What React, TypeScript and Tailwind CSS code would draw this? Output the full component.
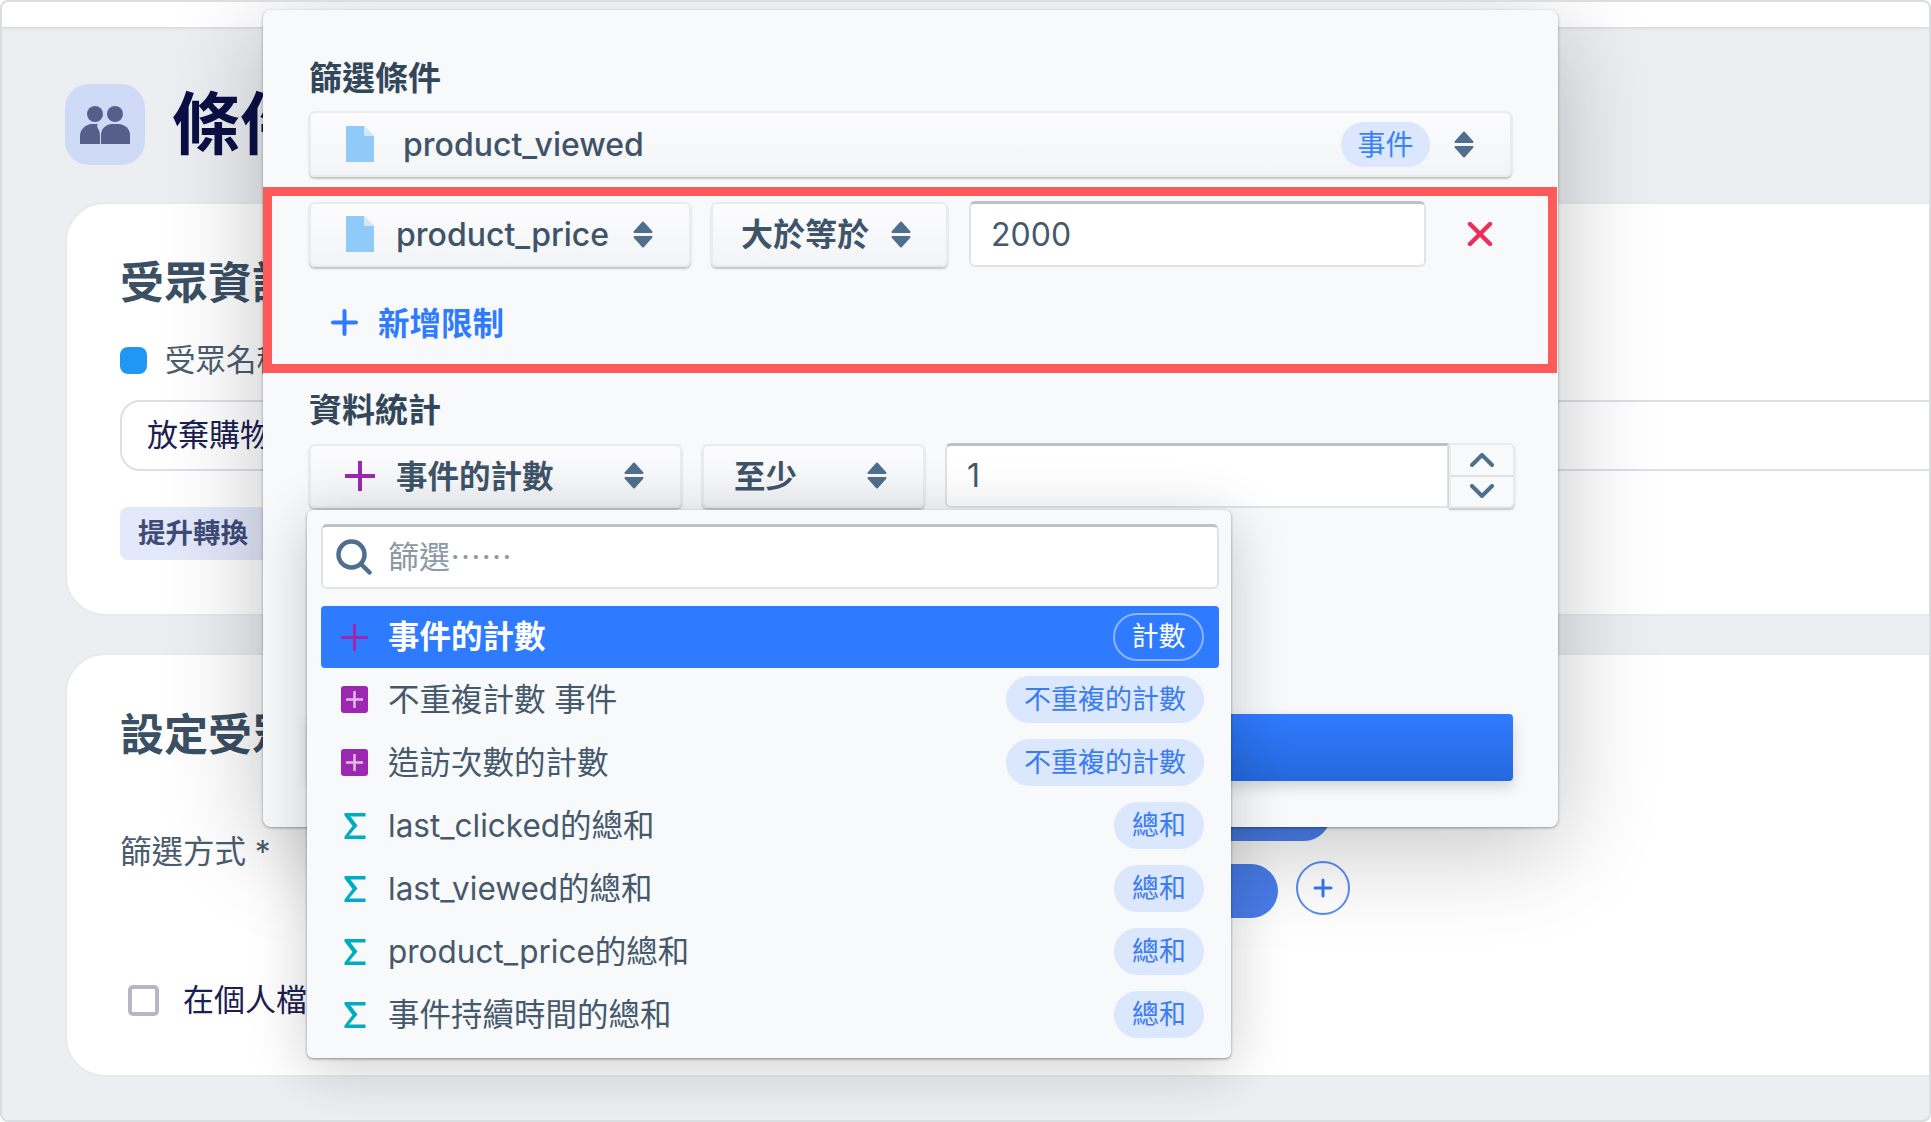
import clsx from "clsx";
import type { ReactNode } from "react";

function Chevrons() {
  return (
    <svg width="20" height="27" viewBox="0 0 20 27" fill="#4f6f8d" stroke="#4f6f8d" strokeWidth="2" strokeLinejoin="round" className="shrink-0">
      <path d="M10 1.5 18.5 11H1.5Z" />
      <path d="M1.5 16H18.5L10 25.5Z" />
    </svg>
  );
}

function FileIcon() {
  return (
    <svg width="28" height="36" viewBox="0 0 28 36" className="shrink-0">
      <path d="M0 0H18L28 10V36H0Z" fill="#90caf9" />
      <path d="M18 0 28 10H18Z" fill="#d3e9fb" />
    </svg>
  );
}

function PlainPlus({ size, stroke }: { size: number; stroke: number }) {
  return (
    <svg width={size} height={size} viewBox={`0 0 ${size} ${size}`} stroke="#9c27b0" strokeWidth={stroke} className="shrink-0">
      <path d={`M${size / 2} 0V${size}M0 ${size / 2}H${size}`} />
    </svg>
  );
}

function PlusSquare() {
  return (
    <svg width="27" height="27" viewBox="0 0 27 27" className="shrink-0">
      <rect width="27" height="27" rx="3" fill="#9c27b0" />
      <path d="M13.5 5V22M5 13.5H22" stroke="#e1bee7" strokeWidth="2.5" />
    </svg>
  );
}

function Sigma() {
  return (
    <svg width="22" height="26" viewBox="0 0 22 26" fill="#00acc1" className="ml-[3px] mr-[2px] shrink-0">
      <path d="M0.5 0H21.5V3.5H6.5L13.5 12.5 5 22.5H21.5V26H0.5V23.5L8.5 13 0.5 2.5Z" />
    </svg>
  );
}

function SelectButton({ className, children }: { className?: string; children: ReactNode }) {
  return (
    <div
      className={clsx(
        "flex items-center rounded-md border-2 border-[#e9ebee] bg-gradient-to-b from-[#fcfcfd] to-[#f2f4f7] text-[#3f5468] shadow-[0_2px_2px_rgba(0,0,0,0.22)]",
        className
      )}
    >
      {children}
    </div>
  );
}

function TextInput({ className, children }: { className?: string; children: ReactNode }) {
  return (
    <div
      className={clsx(
        "flex items-center border-2 border-t-[3px] border-[#e2e3e6] border-t-[#bfc0c3] bg-white text-[32px] text-[#46596c]",
        className
      )}
    >
      {children}
    </div>
  );
}

const menuItems = [
  { icon: <PlusSquare />, label: "不重複計數 事件", tag: "不重複的計數" },
  { icon: <PlusSquare />, label: "造訪次數的計數", tag: "不重複的計數" },
  { icon: <Sigma />, label: "last_clicked的總和", tag: "總和" },
  { icon: <Sigma />, label: "last_viewed的總和", tag: "總和" },
  { icon: <Sigma />, label: "product_price的總和", tag: "總和" },
  { icon: <Sigma />, label: "事件持續時間的總和", tag: "總和" },
];

function MetricMenu() {
  return (
    <div className="absolute left-[44px] top-[500px] h-[548px] w-[924px] rounded-md bg-[#f8f9fb] py-[14px] pl-[14px] pr-[12px] shadow-[0_1px_3px_rgba(0,0,0,0.4),0_10px_60px_rgba(0,0,0,0.2)]">
      <TextInput className="h-[65px] gap-[16px] rounded-md pl-[13px]">
        <svg width="36" height="36" viewBox="0 0 36 36" fill="none" stroke="#4f6f8d" strokeWidth="4.5" strokeLinecap="round" className="shrink-0">
          <circle cx="15.5" cy="15.5" r="13" />
          <path d="M25 25 33.5 33.5" />
        </svg>
        <span className="-mt-[4px] font-['Noto_Sans_CJK_TC',sans-serif] text-[31px] text-[#8c9aa6]">篩選……</span>
      </TextInput>
      <div className="mt-[17px] flex h-[62px] items-center rounded-sm bg-[#2f7bff] pl-[20px] pr-[15px]">
        <PlainPlus size={27} stroke={3} />
        <span className="ml-[20px] flex-1 text-[31.5px] font-bold text-white">事件的計數</span>
        <span className="flex h-[48px] w-[91px] items-center justify-center rounded-full border-2 border-[#8db5fb] text-[27px] text-white">
          計數
        </span>
      </div>
      {menuItems.map((item) => (
        <div key={item.label} className="flex h-[63px] items-center pl-[20px] pr-[15px]">
          {item.icon}
          <span className="ml-[20px] flex-1 pt-[1px] text-[31.5px] text-[#46596c]">{item.label}</span>
          <span className="flex h-[47px] items-center rounded-full bg-[#dbe7fd] px-[18px] pt-[2px] text-[27px] text-[#3b7df0]">
            {item.tag}
          </span>
        </div>
      ))}
    </div>
  );
}

function FilterModal() {
  return (
    <div className="absolute left-[261px] top-[8px] h-[817px] w-[1295px] rounded-lg bg-[#f8f9fb] pt-[46px] shadow-[0_1px_3px_rgba(0,0,0,0.35),0_20px_100px_rgba(0,0,0,0.24)]">
      <h2 className="ml-[46px] h-[40px] pt-[2px] text-[33px] font-bold leading-[40px] text-[#33475b]">篩選條件</h2>
      <SelectButton className="ml-[46px] mt-[15px] h-[66px] w-[1203px] pl-[35px] pr-[36px]">
        <FileIcon />
        <span className="ml-[29px] flex-1 pt-[2px] text-[32px] font-medium">product_viewed</span>
        <span className="flex h-[45px] w-[89px] items-center justify-center rounded-full bg-[#dbe7fd] pt-[2px] text-[28px] text-[#3b82f6]">
          事件
        </span>
        <span className="ml-[24px]">
          <Chevrons />
        </span>
      </SelectButton>

      <section className="mt-[10px] h-[186px] w-[1294px] border-[9px] border-[#ff5a5a] pl-[37px] pt-[5px]">
        <div className="flex items-center">
          <SelectButton className="h-[65px] w-[382px] pl-[35px] pr-[36px]">
            <FileIcon />
            <span className="ml-[22px] flex-1 pt-[1px] text-[32px] font-medium">product_price</span>
            <Chevrons />
          </SelectButton>
          <SelectButton className="ml-[20px] h-[65px] w-[237px] pl-[28px] pr-[35px]">
            <span className="flex-1 pt-[2px] text-[32px] font-bold">大於等於</span>
            <Chevrons />
          </SelectButton>
          <TextInput className="ml-[21px] h-[66px] w-[457px] rounded-md pl-[20px]">2000</TextInput>
          <svg width="26" height="24" viewBox="0 0 26 24" stroke="#e8305a" strokeWidth="4.5" strokeLinecap="round" className="ml-[41px] shrink-0">
            <path d="M3 2 23 22M23 2 3 22" />
          </svg>
        </div>
        <div className="ml-[22px] mt-[33px] flex h-[45px] items-center gap-[20px] text-[#2f7bff]">
          <svg width="27" height="27" viewBox="0 0 27 27" stroke="#2f7bff" strokeWidth="4" strokeLinecap="round">
            <path d="M13.5 2V25M2 13.5H25" />
          </svg>
          <span className="pt-[2px] text-[31.5px] font-bold">新增限制</span>
        </div>
      </section>

      <h2 className="ml-[46px] mt-[16px] h-[40px] pt-[1px] text-[33px] font-bold leading-[40px] text-[#33475b]">資料統計</h2>
      <div className="ml-[46px] mt-[14px] flex items-center">
        <SelectButton className="h-[64px] w-[373px] pl-[34px] pr-[36px]">
          <PlainPlus size={30} stroke={4} />
          <span className="ml-[21px] flex-1 pt-[2px] text-[31.5px] font-bold">事件的計數</span>
          <Chevrons />
        </SelectButton>
        <SelectButton className="ml-[20px] h-[64px] w-[223px] pl-[30px] pr-[36px]">
          <span className="flex-1 pt-[2px] text-[31.5px] font-bold">至少</span>
          <Chevrons />
        </SelectButton>
        <TextInput className="ml-[20px] h-[65px] w-[504px] rounded-l-md pl-[20px]">1</TextInput>
        <div className="flex h-[65px] w-[66px] flex-col divide-y-2 divide-[#dfe1e4] rounded-r-md border-2 border-[#e9ebee] bg-[#f7f9fb] shadow-[0_2px_2px_rgba(0,0,0,0.2)]">
          <div className="flex flex-1 items-center justify-center">
            <svg width="24" height="14" viewBox="0 0 24 14" fill="none" stroke="#4f6f8d" strokeWidth="4" strokeLinecap="round" strokeLinejoin="round">
              <path d="M2 12 12 2 22 12" />
            </svg>
          </div>
          <div className="flex flex-1 items-center justify-center">
            <svg width="24" height="14" viewBox="0 0 24 14" fill="none" stroke="#4f6f8d" strokeWidth="4" strokeLinecap="round" strokeLinejoin="round">
              <path d="M2 2 12 12 22 2" />
            </svg>
          </div>
        </div>
      </div>

      <div className="ml-[46px] mt-[206px] h-[67px] w-[1204px] rounded-sm bg-gradient-to-b from-[#2f7bff] to-[#2468dc] shadow-[0_6px_14px_rgba(0,0,0,0.15)]" />

      <MetricMenu />
    </div>
  );
}

export default function App() {
  return (
    <div className="relative h-[1122px] w-[1931px] overflow-hidden rounded-lg border-2 border-[#dcdde0] bg-[#eceef1] font-['Inter','Noto_Sans_CJK_TC',sans-serif]">
      <div className="h-[25px] bg-white shadow-[0_1px_3px_rgba(0,0,0,0.12)]" />

      <main className="ml-[63px] w-[1960px]">
        <header className="mt-[57px] flex items-center gap-[27px]">
          <div className="flex h-[81px] w-[80px] items-center justify-center rounded-[24px] bg-[#cfdaf6]">
            <svg width="51" height="38" viewBox="0 0 51 38" fill="#565f8a">
              <circle cx="15" cy="8" r="8" />
              <circle cx="35" cy="8" r="8" />
              <path d="M0 38V30C0 23 6 18 12 18H18C15 21 20 22 20 30V38Z" />
              <path d="M21 38V29C21 22 27 18 32 18H38C45 18 50 23 50 29V38Z" />
            </svg>
          </div>
          <h1 className="text-[68px] font-bold leading-[81px] text-[#0a1045]">條件</h1>
        </header>

        <section className="mt-[37px] h-[414px] rounded-[40px] border-2 border-[#e8eaed] bg-white pl-[53px] pt-[51px]">
          <h2 className="h-[56px] text-[44px] font-bold leading-[56px] text-[#3b5064]">受眾資訊</h2>
          <div className="mt-[29px] flex h-[40px] items-center gap-[18px] text-[30.5px] text-[#4a5d70]">
            <span className="h-[27px] w-[27px] rounded-lg bg-[#2196f3]" />
            受眾名稱
          </div>
          <div className="mt-[20px] flex h-[71px] items-center rounded-[20px] border-2 border-[#dfe0e6] pl-[25px] text-[31px] text-[#1a2050]">
            放棄購物車
          </div>
          <div className="mt-[36px] flex h-[53px] w-[200px] items-center rounded-lg bg-[#e3e8fb] pl-[18px] text-[27.5px] font-bold text-[#3f4c78]">
            提升轉換
          </div>
        </section>

        <section className="mt-[37px] h-[424px] rounded-[40px] border-2 border-[#e8eaed] bg-white pl-[53px] pt-[52px]">
          <h2 className="h-[56px] text-[44px] font-bold leading-[56px] text-[#3b5064]">設定受眾</h2>
          <div className="mt-[24px] flex">
            <div className="mt-[45px] h-[40px] text-[31.5px] leading-[40px] text-[#4a5d70]">篩選方式 *</div>
            <div className="ml-[230px] flex flex-col gap-[23px]">
              <div className="h-[54px] w-[830px] rounded-full bg-[#4a7fee]" />
              <div className="flex items-center gap-[18px]">
                <div className="h-[54px] w-[777px] rounded-full bg-[#4a7fee]" />
                <div className="-mt-[6px] flex h-[54px] w-[54px] items-center justify-center rounded-full border-2 border-[#5a8df2]">
                  <svg width="20" height="20" viewBox="0 0 20 20" stroke="#3a78f0" strokeWidth="3" strokeLinecap="round">
                    <path d="M10 2V18M2 10H18" />
                  </svg>
                </div>
              </div>
            </div>
          </div>
          <div className="mt-[62px] flex h-[40px] items-center gap-[24px] pl-[8px] text-[31px] text-[#1a2050]">
            <span className="h-[31px] w-[31px] rounded-[5px] border-[4px] border-[#b4b8c6] bg-white" />
            在個人檔案
          </div>
        </section>
      </main>

      <FilterModal />
    </div>
  );
}
